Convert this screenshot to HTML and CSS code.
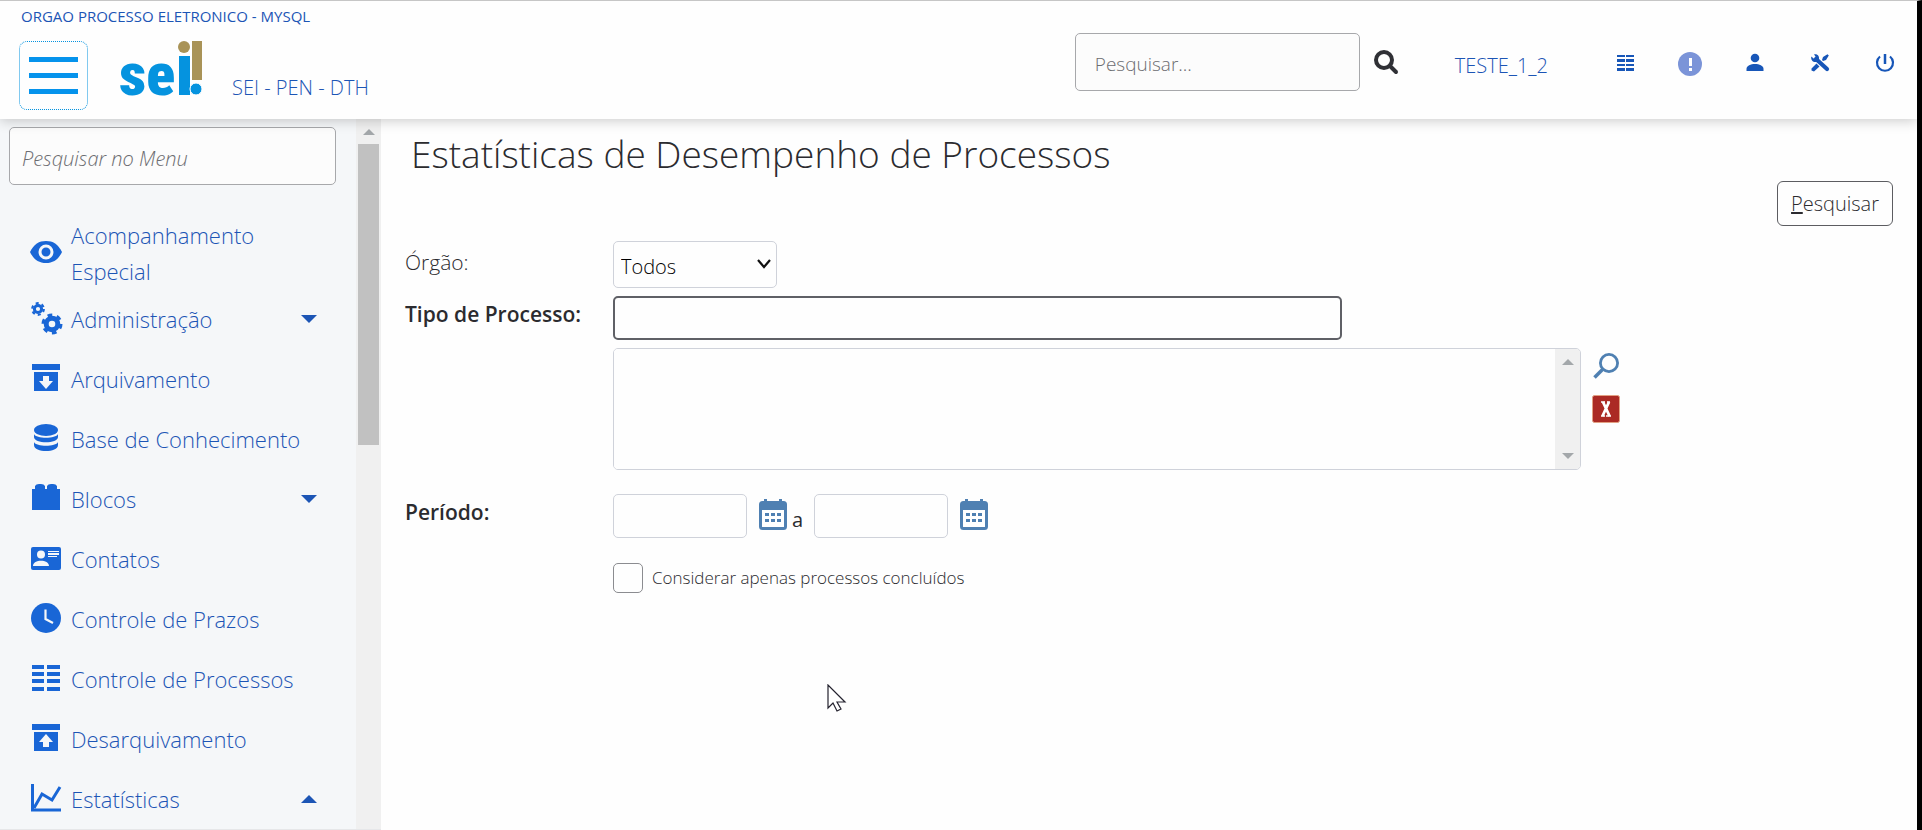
FILE: index.html
```html
<!DOCTYPE html>
<html lang="pt-BR">
<head>
<meta charset="utf-8">
<meta name="viewport" content="width=device-width, initial-scale=1">
<title>SEI - Estatísticas de Desempenho de Processos</title>
<link rel="stylesheet" href="styles.css">
</head>
<body>
<header class="topbar">
  <div class="topbar-left">
    <a class="org" href="#">ORGAO PROCESSO ELETRONICO - MYSQL</a>
    <div class="brand">
      <button class="menu-toggle" type="button" aria-label="Menu"><span></span><span></span><span></span></button>
      <a class="logo" href="#" aria-label="sei!">
        <svg width="83" height="56" viewBox="0 0 83 56">
          <text class="logo-text" x="-1" y="54">se</text>
          <rect x="59" y="15" width="11" height="39" fill="#0593df"/>
          <circle cx="64" cy="6" r="6" fill="#a99357"/>
          <rect x="72" y="0" width="10" height="39" fill="#a99357"/>
          <circle cx="76" cy="48" r="6" fill="#0593df" stroke="#fefefe" stroke-width="1"/>
        </svg>
      </a>
      <a class="unit" href="#">SEI - PEN - DTH</a>
    </div>
  </div>
  <form class="quick-search">
    <input type="text" placeholder="Pesquisar..." aria-label="Pesquisar">
    <button class="icon-button" type="button" aria-label="Pesquisar">
      <svg width="26" height="26" viewBox="0 0 26 26"><circle cx="11" cy="11" r="8" fill="none" stroke="#2f3035" stroke-width="4"/><path d="M17 17l6 6" stroke="#2f3035" stroke-width="4" stroke-linecap="round"/></svg>
    </button>
  </form>
  <a class="user-unit" href="#">TESTE_1_2</a>
  <nav class="tools" aria-label="Ferramentas">
    <a href="#" aria-label="Controle de Processos"><svg viewBox="0 0 26 26"><path fill="#1756b8" d="M5 5h8v2H5zM14 5h8v2h-8zM5 9h8v3H5zM14 9h8v3h-8zM5 14h8v2H5zM14 14h8v2h-8zM5 18h8v3H5zM14 18h8v3h-8z"/></svg></a>
    <a href="#" aria-label="Avisos"><svg viewBox="0 0 26 26"><circle cx="13" cy="14" r="12" fill="#7b94d8"/><path d="M12 8h3v8h-3zM12 18h3v3h-3z" fill="#fff"/></svg></a>
    <a href="#" aria-label="Usuário"><svg viewBox="0 0 26 26"><circle cx="13" cy="8" r="4.3" fill="#1756b8"/><path d="M4.500 21v-2c0-3.200 4.300-5 8.500-5s8.500 1.800 8.500 5v2z" fill="#1756b8"/></svg></a>
    <a href="#" aria-label="Configurações"><svg viewBox="0 0 26 26"><path d="M9 9l11 10" stroke="#1756b8" stroke-width="4.200" stroke-linecap="round"/><path d="M4.300 6.500l3 2.500 1.700-1.500-2-3.200c3-.6 5.500 1.200 5 4.700L9.500 12C6 12.500 3.600 10 4.300 6.500z" fill="#1756b8"/><path d="M15 10l1-3 4.500-2.800 1.300 1.300L19 10l-3 1zM9.500 13.500l3 3L7 21.500 4.500 20.500 4.500 18.500z" fill="#1756b8"/></svg></a>
    <a href="#" aria-label="Sair"><svg viewBox="0 0 26 26"><path d="M8 6.500a8 8 0 1 0 10 0" fill="none" stroke="#1756b8" stroke-width="2.200"/><path d="M13 4v10" stroke="#1756b8" stroke-width="2.500"/></svg></a>
  </nav>
</header>
<div class="layout">
  <aside class="sidebar">
    <div class="menu">
      <input class="menu-search" type="text" placeholder="Pesquisar no Menu" aria-label="Pesquisar no Menu">
      <ul class="menu-list">
        <li><a href="#"><svg viewBox="0 0 34 34"><path d="M1 16C5 8 10 5 17 5s12 3 16 11c-4 8-9 11-16 11S5 24 1 16z" fill="#1966d6"/><circle cx="17" cy="16" r="6" fill="#1966d6" stroke="#f5f7f9" stroke-width="3"/></svg><span>Acompanhamento Especial</span></a></li>
        <li><a href="#"><svg viewBox="0 0 34 34"><g fill="none" stroke="#1966d6"><circle cx="9" cy="7" r="3.600" stroke-width="3"/><circle cx="9" cy="7" r="5.800" stroke-width="2.200" stroke-dasharray="3.040"/><circle cx="23" cy="22" r="5.800" stroke-width="5"/><circle cx="23" cy="22" r="9" stroke-width="3" stroke-dasharray="4.710"/></g></svg><span>Administração</span><i class="caret"></i></a></li>
        <li><a href="#"><svg viewBox="0 0 34 34"><path fill="#1966d6" d="M3 2h28v6H3zM5 10h24v19H5z"/><path d="M14 14h6v5h4l-7 8-7-8h4z" fill="#f5f7f9"/></svg><span>Arquivamento</span></a></li>
        <li><a href="#"><svg viewBox="0 0 34 34"><g fill="#1966d6"><ellipse cx="17" cy="8" rx="12" ry="6"/><path d="M5 12c2 5 22 5 24 0v3c0 7-24 7-24 0zM5 20c2 5 22 5 24 0v3c0 8-24 8-24 0z"/></g></svg><span>Base de Conhecimento</span></a></li>
        <li><a href="#"><svg viewBox="0 0 34 34"><path d="M3 7h3V4q1-2 4-2h2q3 0 4 2v3h2V4q1-2 4-2h2q3 0 4 2v3h3v21H3z" fill="#1966d6"/></svg><span>Blocos</span><i class="caret"></i></a></li>
        <li><a href="#"><svg viewBox="0 0 34 34"><rect x="2" y="5" width="30" height="23" rx="2" fill="#1966d6"/><circle cx="12" cy="12.500" r="4" fill="#f5f7f9"/><path d="M4 24c0-7 16-7 16 0zM19 9h11v1H19zM19 11h11v2H19zM19 14h9v1h-9z" fill="#f5f7f9"/></svg><span>Contatos</span></a></li>
        <li><a href="#"><svg viewBox="0 0 34 34"><circle cx="17" cy="16" r="15" fill="#1966d6"/><path d="M16.500 7.500v9.500l7.500 4" fill="none" stroke="#f5f7f9" stroke-width="2.200"/></svg><span>Controle de Prazos</span></a></li>
        <li><a href="#"><svg viewBox="0 0 34 34"><path fill="#1966d6" d="M3 3h12v4H3zM18 3h13v4H18zM3 10h12v4H3zM18 10h13v4H18zM3 17h12v4H3zM18 17h13v4H18zM3 25h12v4H3zM18 25h13v4H18z"/></svg><span>Controle de Processos</span></a></li>
        <li><a href="#"><svg viewBox="0 0 34 34"><path fill="#1966d6" d="M3 2h28v6H3zM5 10h24v19H5z"/><path d="M14 25h6v-5h4l-7-8-7 8h4z" fill="#f5f7f9"/></svg><span>Desarquivamento</span></a></li>
        <li><a href="#"><svg viewBox="0 0 34 34"><path d="M3.500 2v26H32" fill="none" stroke="#1966d6" stroke-width="3"/><path d="M5 26l8-14 10 6 8-13" fill="none" stroke="#1966d6" stroke-width="3"/></svg><span>Estatísticas</span><i class="caret caret-up"></i></a></li>
      </ul>
    </div>
    <div class="scrollbar"><i class="arrow arrow-up"></i><div class="thumb"></div></div>
  </aside>
  <main class="content">
    <h1>Estatísticas de Desempenho de Processos</h1>
    <div class="commands"><button class="command" type="button"><u>P</u>esquisar</button></div>
    <form class="filters">
      <label for="orgao">Órgão:</label>
      <div class="select-wrap">
        <select id="orgao" class="field orgao"><option>Todos</option></select>
        <svg class="chevron" width="14" height="10" viewBox="0 0 14 10" aria-hidden="true"><path d="M1 1l6 7 6-7" fill="none" stroke="#111" stroke-width="2.200"/></svg>
      </div>
      <label class="required" for="tipo">Tipo de Processo:</label>
      <div class="tipo">
        <input id="tipo" class="field focused" type="text">
        <div class="list-row">
          <div class="listbox">
            <select multiple size="4" aria-label="Tipos de processo selecionados"></select>
            <div class="list-scroll"><i class="arrow arrow-up"></i><i class="arrow arrow-down"></i></div>
          </div>
          <div class="list-actions">
            <button class="icon-button" type="button" aria-label="Selecionar tipos de processo"><svg width="28" height="28" viewBox="0 0 28 28"><circle cx="17" cy="11" r="8.600" fill="none" stroke="#4f80b2" stroke-width="2.800"/><path d="M10.500 17.500L2.500 25.500" stroke="#4f80b2" stroke-width="3.600"/></svg></button>
            <button class="icon-button remove" type="button" aria-label="Remover tipos de processo"><svg width="28" height="28" viewBox="0 0 28 28"><rect x=".5" y=".5" width="27" height="27" rx="2" fill="#ab2a24" stroke="#e2a183"/><path d="M11 7l6.500 14M17 7l-6.500 14" stroke="#fff" stroke-width="2.800"/><path d="M9 7h4M15 7h3M9 21h4M14 21h5" stroke="#fff" stroke-width="1.500"/></svg></button>
          </div>
        </div>
      </div>
      <label class="required" for="inicio">Período:</label>
      <div class="period">
        <input id="inicio" class="field date" type="text">
        <button class="icon-button" type="button" aria-label="Selecionar data inicial"><svg width="28" height="32" viewBox="0 0 28 32"><rect x="1.500" y="4.500" width="25" height="26" rx="2" fill="#fff" stroke="#4f80b2" stroke-width="3"/><path d="M2 4h24v8H2zM5 1h3v4H5zM20 1h3v4h-3z" fill="#4f80b2"/><path d="M6 15h4v3H6zM12 15h4v3h-4zM18 15h4v3h-4zM6 21h4v3H6zM12 21h4v3h-4zM18 21h4v3h-4z" fill="#4f80b2"/></svg></button>
        <label class="until" for="fim">a</label>
        <input id="fim" class="field date" type="text">
        <button class="icon-button" type="button" aria-label="Selecionar data final"><svg width="28" height="32" viewBox="0 0 28 32"><rect x="1.500" y="4.500" width="25" height="26" rx="2" fill="#fff" stroke="#4f80b2" stroke-width="3"/><path d="M2 4h24v8H2zM5 1h3v4H5zM20 1h3v4h-3z" fill="#4f80b2"/><path d="M6 15h4v3H6zM12 15h4v3h-4zM18 15h4v3h-4zM6 21h4v3H6zM12 21h4v3h-4zM18 21h4v3h-4z" fill="#4f80b2"/></svg></button>
      </div>
      <div class="done"><input id="concluidos" type="checkbox"><label for="concluidos">Considerar apenas processos concluídos</label></div>
    </form>
  </main>
</div>
<svg class="pointer" width="20" height="30" viewBox="0 0 20 30" aria-hidden="true"><path d="M1 1v23l5-5 4 8 4-2-4-7h8z" fill="#fff" stroke="#24222e" stroke-width="1.200"/></svg>
</body>
</html>
```
FILE: styles.css
```css
* { box-sizing: border-box; }

body {
  margin: 0;
  height: 100vh;
  display: flex;
  flex-direction: column;
  overflow: hidden;
  border-top: 1px solid #c6c6c6;
  border-right: 5px solid #000;
  background: #fefefe;
  color: #2b2b2f;
  font-family: "Open Sans", "Noto Sans", sans-serif;
  font-weight: 300;
  font-size: 20px;
}

a { color: #1c55b5; text-decoration: none; }
input, select, button { font: inherit; color: inherit; }
.icon-button { border: 0; padding: 0; background: none; display: flex; }

.topbar {
  position: relative;
  z-index: 1;
  display: flex;
  align-items: center;
  height: 118px;
  flex: none;
  padding: 4px 19px 0 0;
  background: #fefefe;
  box-shadow: 0 2px 12px rgba(0, 0, 0, 0.2);
}
.topbar-left { flex: 1; align-self: stretch; padding: 1px 0 0 19px; }
.org { display: block; padding-left: 2px; font-size: 15px; font-weight: 400; line-height: 20px; }
.brand { display: flex; align-items: flex-start; margin-top: 15px; }
.menu-toggle {
  width: 69px;
  height: 69px;
  padding: 0 9px;
  display: flex;
  flex-direction: column;
  justify-content: center;
  gap: 11px;
  border: 1px dotted #0593df;
  border-radius: 8px;
  background: none;
}
.menu-toggle span { height: 5px; background: #0593ec; }
.logo { margin: 0 29px 0 32px; height: 56px; }
.logo svg { overflow: visible; }
.logo-text { font-family: "Roboto Condensed", Lato, sans-serif; font-weight: 900; font-size: 60px; fill: #0593df; }
.unit { margin-top: 33px; line-height: 28px; }

.quick-search { display: flex; align-items: center; gap: 13px; }
.quick-search input {
  width: 285px;
  height: 58px;
  padding: 4px 20px 0 19px;
  border: 1px solid #a7a8ab;
  border-radius: 5px;
  background: #fcfcfc;
  font-size: 19px;
}
input::placeholder { color: #6c6d71; opacity: 1; }
.user-unit { margin: 6px 0 0 56px; }
.tools { display: flex; gap: 39px; margin: 2px 0 0 64px; }
.tools svg { width: 26px; height: 26px; display: block; }

.layout { flex: 1; display: flex; min-height: 0; }
.sidebar { width: 381px; flex: none; display: flex; background: #f5f7f9; border-bottom: 1px solid #e6e7e9; }
.menu { flex: 1; overflow: hidden; padding: 8px 20px 0 9px; }
.menu-search {
  width: 100%;
  height: 58px;
  padding: 4px 12px 0;
  border: 1px solid #a7a8ab;
  border-radius: 5px;
  background: #fcfcfc;
  font-style: italic;
}
.menu-list { list-style: none; margin: 32px 0 0; padding: 0; }
.menu-list a {
  display: flex;
  align-items: center;
  min-height: 60px;
  padding: 0 19px 0 20px;
  font-size: 22px;
  line-height: 36px;
}
.menu-list svg { width: 34px; height: 34px; flex: none; margin-right: 8px; }
.menu-list span { flex: 1; }
.caret { border: 8px solid transparent; border-top-color: #1c55b5; border-bottom: 0; }
.caret-up { border-top: 0; border-bottom: 8px solid #1c55b5; }

.scrollbar { width: 25px; padding: 10px 2px 0; background: #f0f0f0; }
.arrow { display: block; width: 0; margin: 0 auto; border: 6px solid transparent; }
.arrow-up { border-top: 0; border-bottom-color: #a3a7aa; }
.arrow-down { border-bottom: 0; border-top-color: #a3a7aa; }
.thumb { height: 43%; margin-top: 9px; background: #c1c1c1; }

.content { flex: 1; min-width: 0; padding: 11px 24px 0; }
h1 { margin: 0; padding-left: 6px; font-size: 37px; font-weight: 300; line-height: 48px; }
.commands { display: flex; justify-content: flex-end; margin-top: 3px; }
.command { height: 45px; padding: 0 13px; border: 1px solid #5c5d61; border-radius: 6px; background: #fefefe; }
.filters { display: grid; grid-template-columns: 208px 1fr; row-gap: 8px; margin-top: 15px; }
.filters > label { font-size: 21px; line-height: 26px; padding-top: 8px; }
.filters .required { font-weight: 600; padding-top: 5px; }
.field { height: 44px; border: 1px solid #cfd2da; border-radius: 5px; background: #fefefe; display: block; }
.select-wrap { position: relative; width: 164px; }
.orgao { appearance: none; width: 100%; height: 47px; padding: 4px 24px 0 7px; color: #000; }
.chevron { position: absolute; right: 6px; top: 18px; pointer-events: none; }
.focused { width: 729px; max-width: 100%; border: 2px solid #5f6066; outline: 0; }
.list-row { display: flex; gap: 11px; margin-top: 8px; }
.listbox { flex: 0 1 968px; height: 122px; display: flex; border: 1px solid #cfd2da; border-radius: 5px; overflow: hidden; }
.listbox select { flex: 1; border: 0; background: #fefefe; overflow: hidden; }
.list-scroll { width: 25px; background: #f0f0f0; padding: 10px 0; display: flex; flex-direction: column; justify-content: space-between; }
.list-actions { padding-top: 4px; display: flex; flex-direction: column; gap: 15px; }
.filters > .tipo { margin-bottom: 16px; }
.period { display: flex; align-items: center; }
.date { width: 134px; }
.period .icon-button { margin: 0 0 4px 12px; }
.until { margin: 6px 12px 0 5px; font-weight: 400; width: 10px; }
.done { grid-column: 2; display: flex; align-items: center; gap: 9px; margin-top: 17px; font-size: 17px; }
.done input { appearance: none; width: 30px; height: 30px; margin: 0; border: 1px solid #8b8c90; border-radius: 5px; background: #fefefe; }
.done label { margin-bottom: 2px; }

.pointer { position: absolute; left: 827px; top: 684px; }
```
